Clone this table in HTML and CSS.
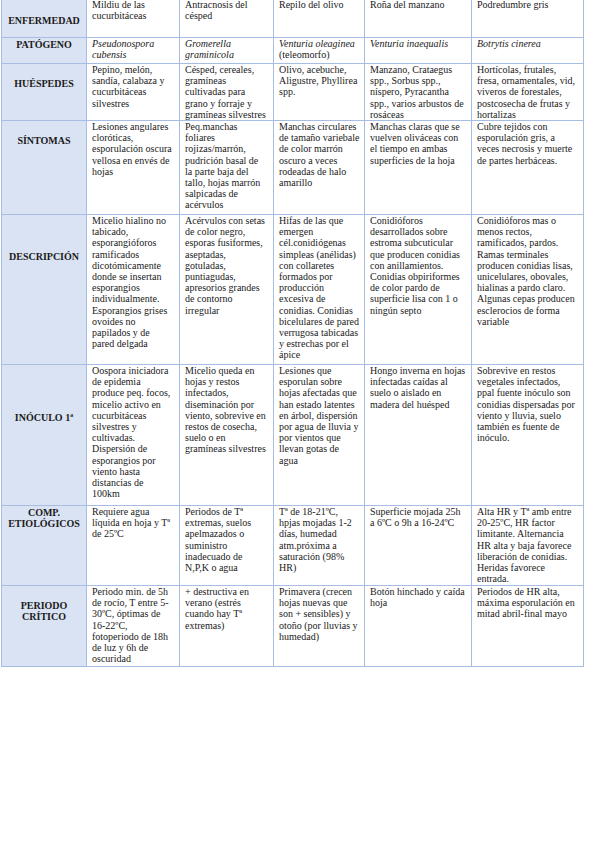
FILE: index.html
```html
<!DOCTYPE html>
<html lang="es">
<head>
<meta charset="utf-8">
<title>Enfermedades fúngicas</title>
<link rel="stylesheet" href="styles.css">
</head>
<body>
<table class="grid">
  <colgroup>
    <col class="c-lab"><col class="c-1"><col class="c-2"><col class="c-3"><col class="c-4"><col class="c-5">
  </colgroup>
  <tbody>
    <tr class="r-enf">
      <th class="lab off-e">ENFERMEDAD</th>
      <td>Mildiu de las<br>cucurbitáceas</td>
      <td>Antracnosis del<br>césped</td>
      <td>Repilo del olivo</td>
      <td>Roña del manzano</td>
      <td>Podredumbre gris</td>
    </tr>
    <tr class="r-pat">
      <th class="lab">PATÓGENO</th>
      <td><i>Pseudonospora<br>cubensis</i></td>
      <td><i>Gromerella<br>graminicola</i></td>
      <td><i>Venturia oleaginea</i><br>(teleomorfo)</td>
      <td><i>Venturia inaequalis</i></td>
      <td><i>Botrytis cinerea</i></td>
    </tr>
    <tr class="r-hue">
      <th class="lab off-1">HUÉSPEDES</th>
      <td>Pepino, melón,<br>sandía, calabaza y<br>cucurbitáceas<br>silvestres</td>
      <td>Césped, cereales,<br>gramíneas<br>cultivadas para<br>grano y forraje y<br>gramíneas silvestres</td>
      <td>Olivo, acebuche,<br>Aligustre, Phyllirea<br>spp.</td>
      <td>Manzano, Crataegus<br>spp., Sorbus spp.,<br>níspero, Pyracantha<br>spp., varios arbustos de<br>rosáceas</td>
      <td>Hortícolas, frutales,<br>fresa, ornamentales, vid,<br>viveros de forestales,<br>postcosecha de frutas y<br>hortalizas</td>
    </tr>
    <tr class="r-sin">
      <th class="lab off-1">SÍNTOMAS</th>
      <td>Lesiones angulares<br>cloróticas,<br>esporulación oscura<br>vellosa en envés de<br>hojas</td>
      <td>Peq.manchas<br>foliares<br>rojizas/marrón,<br>pudrición basal de<br>la parte baja del<br>tallo, hojas marrón<br>salpicadas de<br>acérvulos</td>
      <td>Manchas circulares<br>de tamaño variebale<br>de color marrón<br>oscuro a veces<br>rodeadas de halo<br>amarillo</td>
      <td>Manchas claras que se<br>vuelven oliváceas con<br>el tiempo en ambas<br>superficies de la hoja</td>
      <td>Cubre tejidos con<br>esporulación gris, a<br>veces necrosis y muerte<br>de partes herbáceas.</td>
    </tr>
    <tr class="r-des">
      <th class="lab off-3">DESCRIPCIÓN</th>
      <td>Micelio hialino no<br>tabicado,<br>esporangióforos<br>ramificados<br>dicotómicamente<br>donde se insertan<br>esporangios<br>individualmente.<br>Esporangios grises<br>ovoides no<br>papilados y de<br>pared delgada</td>
      <td>Acérvulos con setas<br>de color negro,<br>esporas fusiformes,<br>aseptadas,<br>gotuladas,<br>puntiagudas,<br>apresorios grandes<br>de contorno<br>irregular</td>
      <td>Hifas de las que<br>emergen<br>cél.conidiógenas<br>simpleas (anélidas)<br>con collaretes<br>formados por<br>producción<br>excesiva de<br>conidias. Conidias<br>bicelulares de pared<br>verrugosa tabicadas<br>y estrechas por el<br>ápice</td>
      <td>Conidióforos<br>desarrollados sobre<br>estroma subcuticular<br>que producen conidias<br>con anillamientos.<br>Conidias obpiriformes<br>de color pardo de<br>superficie lisa con 1 o<br>ningún septo</td>
      <td>Conidióforos mas o<br>menos rectos,<br>ramificados, pardos.<br>Ramas terminales<br>producen conidias lisas,<br>unicelulares, obovales,<br>hialinas a pardo claro.<br>Algunas cepas producen<br>esclerocios de forma<br>variable</td>
    </tr>
    <tr class="r-ino">
      <th class="lab off-4">INÓCULO 1ª</th>
      <td>Oospora iniciadora<br>de epidemia<br>produce peq. focos,<br>micelio activo en<br>cucurbitáceas<br>silvestres y<br>cultivadas.<br>Dispersión de<br>esporangios por<br>viento hasta<br>distancias de<br>100km</td>
      <td>Micelio queda en<br>hojas y restos<br>infectados,<br>diseminación por<br>viento, sobrevive en<br>restos de cosecha,<br>suelo o en<br>gramíneas silvestres</td>
      <td>Lesiones que<br>esporulan sobre<br>hojas afectadas que<br>han estado latentes<br>en árbol, dispersión<br>por agua de lluvia y<br>por vientos que<br>llevan gotas de<br>agua</td>
      <td>Hongo inverna en hojas<br>infectadas caídas al<br>suelo o aislado en<br>madera del huésped</td>
      <td>Sobrevive en restos<br>vegetales infectados,<br>ppal fuente inóculo son<br>conidias dispersadas por<br>viento y lluvia, suelo<br>también es fuente de<br>inóculo.</td>
    </tr>
    <tr class="r-com">
      <th class="lab">COMP.<br>ETIOLÓGICOS</th>
      <td>Requiere agua<br>líquida en hoja y Tª<br>de 25ºC</td>
      <td>Periodos de Tª<br>extremas, suelos<br>apelmazados o<br>suministro<br>inadecuado de<br>N,P,K o agua</td>
      <td>Tª de 18-21ºC,<br>hpjas mojadas 1-2<br>días, humedad<br>atm.próxima a<br>saturación (98%<br>HR)</td>
      <td>Superficie mojada 25h<br>a 6ºC o 9h a 16-24ºC</td>
      <td>Alta HR y Tª amb entre<br>20-25ºC, HR factor<br>limitante. Alternancia<br>HR alta y baja favorece<br>liberación de conidias.<br>Heridas favorece<br>entrada.</td>
    </tr>
    <tr class="r-per">
      <th class="lab off-1">PERIODO<br>CRÍTICO</th>
      <td>Periodo min. de 5h<br>de rocío, T entre 5-<br>30ºC, óptimas de<br>16-22ºC,<br>fotoperiodo de 18h<br>de luz y 6h de<br>oscuridad</td>
      <td>+ destructiva en<br>verano (estrés<br>cuando hay Tª<br>extremas)</td>
      <td>Primavera (crecen<br>hojas nuevas que<br>son + sensibles) y<br>otoño (por lluvias y<br>humedad)</td>
      <td>Botón hinchado y caída<br>hoja</td>
      <td>Periodos de HR alta,<br>máxima esporulación en<br>mitad abril-final mayo</td>
    </tr>
  </tbody>
</table>
</body>
</html>
```

FILE: styles.css
```css
html, body {
  margin: 0;
  padding: 0;
  background: #ffffff;
}

body {
  font-family: "Liberation Serif", "Times New Roman", serif;
  font-size: 10px;
  line-height: 11.2px;
  color: #1a1a1a;
}

.grid {
  border-collapse: collapse;
  table-layout: fixed;
  width: 582px;
  margin: -2px 0 0 1px;
}

.c-lab { width: 85px; }
.c-1 { width: 93px; }
.c-2 { width: 94px; }
.c-3 { width: 91px; }
.c-4 { width: 107px; }
.c-5 { width: 112px; }

.grid td,
.grid th {
  border: 1px solid #a8bde4;
  vertical-align: top;
  padding: 0 4px 0 5px;
  white-space: nowrap;
  overflow: hidden;
  text-align: left;
  font-weight: normal;
}

.grid th.lab {
  background: #dae3f3;
  font-weight: bold;
  text-align: center;
  padding: 1px 2px 0 2px;
}

.grid th.off-e { padding-top: 16px; }
.grid th.off-1 { padding-top: 13.5px; }
.grid th.off-3 { padding-top: 36px; }
.grid th.off-4 { padding-top: 47px; }

.grid i { font-style: italic; }

.r-enf { height: 39px; }
.r-pat { height: 26px; }
.r-hue { height: 57px; }
.r-sin { height: 94px; }
.r-des { height: 150px; }
.r-ino { height: 141px; }
.r-com { height: 80px; }
.r-per { height: 81px; }
```
